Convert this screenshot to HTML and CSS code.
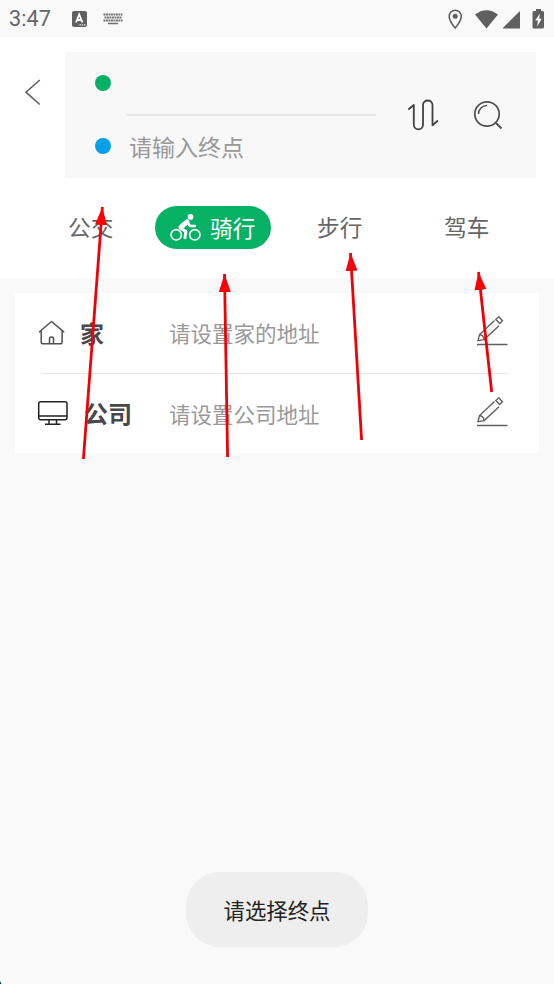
FILE: index.html
```html
<!DOCTYPE html>
<html lang="zh-CN">
<head>
<meta charset="UTF-8">
<title>路线</title>
<link rel="stylesheet" href="styles.css">
</head>
<body>
<main class="screen">
  <header class="status">
    <span class="clock">3:47</span>
    <svg class="ime" width="15" height="16" viewBox="0 0 15 16"><rect width="15" height="16" rx="2" fill="#606060"/><path d="M4 11.5 7.2 3.5 10.4 11.5M5.2 9h4" fill="none" stroke="#fff" stroke-width="1.8"/><path d="M7.5 13.8h6" stroke="#fff" stroke-width="1.2" stroke-dasharray="1.3 1"/></svg>
    <svg class="keyboard" width="20" height="12" viewBox="0 0 20 12"><g stroke="#707070" stroke-width="1.9" stroke-dasharray="1.9 .6"><path d="M.5 1.5h19M1.5 4.5h17M.5 7.5h19"/></g><path d="M5 10.5h10" stroke="#707070" stroke-width="1.5"/></svg>
    <svg class="system" width="100" height="24" viewBox="0 0 100 24"><g fill="#606060"><path d="M1.2 9.2a6 6 0 0 1 12 0C13.2 14 7.2 21 7.2 21S1.2 14 1.2 9.2Z" fill="none" stroke="#606060" stroke-width="1.6"/><circle cx="7.2" cy="9.2" r="2.5"/><path d="M27 7.500Q38.500-1 50 7.500L38.500 21.500ZM55 21.500V20.800L72 4V21.500ZM86 4H88V2H93V4H94.500a1.500 1.500 0 0 1 1.500 1.500V20a1.500 1.500 0 0 1-1.500 1.500H86A1.500 1.500 0 0 1 84.500 20V5.500A1.500 1.500 0 0 1 86 4Z"/></g><path d="M92 6.500 87.200 13.500H89.900L89.200 19.500 93.700 11.800H91.200Z" fill="#fff"/></svg>
  </header>
  <section class="planner">
    <div class="search-row">
      <svg class="back" width="65" height="126" viewBox="0 0 65 126"><path d="M39.8 28 26 40.2 39.8 52.5" fill="none" stroke="#606060" stroke-width="1.6"/></svg>
      <div class="search-box">
        <div class="dots"><i class="dot start"></i><i class="dot end"></i></div>
        <div class="fields"><div class="field origin"></div><div class="field destination">请输入终点</div></div>
        <svg class="swap" width="32" height="32" viewBox="0 0 32 32"><path d="M1.3 10.5 6.8 6V25.5C6.8 32 16 32 16 25.5V6C16 0 25.5 0 25.5 6V26.3L31 21.5" fill="none" stroke="#404040" stroke-width="1.8" stroke-linejoin="round"/></svg>
        <svg class="find" width="30" height="30" viewBox="0 0 30 30"><g fill="none" stroke="#505050"><circle cx="14" cy="14" r="12.2" stroke-width="1.7"/><path d="M5.500 14A8.500 8.500 0 0 1 14 5.400" stroke-width="1.5"/><path d="M22.500 22.500 28.500 28.500" stroke-width="2"/></g></svg>
      </div>
    </div>
    <nav class="tabs">
      <span class="tab">公交</span>
      <span class="tab active"><svg width="31" height="28" viewBox="0 0 31 28"><g fill="none" stroke="#fff"><circle cx="6.200" cy="20.800" r="5.200" stroke-width="1.6"/><circle cx="24.800" cy="20.800" r="5.200" stroke-width="1.6"/><path d="M17 7.800 11 13.200" stroke-width="5" stroke-linecap="round"/><path d="M10.300 14 15.800 17.400 15 23.800" stroke-width="3" stroke-linejoin="round" stroke-linecap="round"/><path d="M17.500 8 20 12H25" stroke-width="2.400" stroke-linecap="round" stroke-linejoin="round"/></g><circle cx="20.500" cy="2.900" r="2.900" fill="#fff"/></svg>骑行</span>
      <span class="tab">步行</span>
      <span class="tab">驾车</span>
    </nav>
  </section>
  <section class="places">
    <div class="place">
      <svg class="symbol" width="30" height="26" viewBox="0 0 30 26"><g fill="none" stroke="#505050" stroke-width="1.5" stroke-linejoin="round" stroke-linecap="round"><path d="M1.500 11.800 13.500 1.500 25.800 11.800M3.200 10.500V22Q3.200 23.800 5 23.800H22.300Q24.100 23.800 24.100 22V10.500"/><path d="M11.500 23.500V18.500Q11.500 17 13.500 17T15.500 18.500V23.500"/></g></svg>
      <strong class="label">家</strong><span class="hint">请设置家的地址</span>
      <svg class="edit" width="32" height="30" viewBox="0 0 32 30"><g fill="none" stroke="#606060" stroke-width="1.4"><path d="M1 28.500H31.500M18.500 4.500 3.500 18.500 2 24.700 8.200 23.600 23 9.800M3.500 18.500Q7.500 19 8.200 23.600M19.800 3.500 22.800.8 26.500 4.700 23.700 7.600Z"/></g></svg>
    </div>
    <div class="place">
      <svg class="symbol" width="32" height="26" viewBox="0 0 32 26"><g fill="none" stroke="#222" stroke-width="1.5"><rect x="1.700" y="1.700" width="28.300" height="18" rx="2"/><path d="M1.700 16H30M12 20V23.500M19.500 20V23.500M8 24.200H23.500"/></g></svg>
      <strong class="label work">公司</strong><span class="hint">请设置公司地址</span>
      <svg class="edit" width="32" height="30" viewBox="0 0 32 30"><g fill="none" stroke="#606060" stroke-width="1.4"><path d="M1 28.500H31.500M18.500 4.500 3.500 18.500 2 24.700 8.200 23.600 23 9.800M3.500 18.500Q7.500 19 8.200 23.600M19.800 3.500 22.800.8 26.500 4.700 23.700 7.600Z"/></g></svg>
    </div>
  </section>
  <div class="toast">请选择终点</div>
  <svg class="annotations" width="554" height="984" viewBox="0 0 554 984">
    <defs><marker id="tip" viewBox="0 0 18 12" refX="18" refY="6" markerWidth="18" markerHeight="12.500" markerUnits="userSpaceOnUse" orient="auto"><path d="M0 0 18 6 0 12Z" fill="#fa0008"/></marker></defs>
    <g stroke="#f20008" stroke-width="2.8"><path d="M83.400 459 102.400 207" marker-end="url(#tip)"/><path d="M227.600 457 224.500 274" marker-end="url(#tip)"/><path d="M361.600 440 350.500 253" marker-end="url(#tip)"/><path d="M491.700 392 478.500 272" marker-end="url(#tip)"/></g>
    <path d="M0 981 1.500 984H0Z" fill="#123447"/>
  </svg>
</main>
</body>
</html>
```
FILE: styles.css
```css
* { box-sizing: border-box; }
body { margin: 0; }
.screen {
  position: relative;
  display: flex;
  flex-direction: column;
  width: 554px;
  height: 984px;
  overflow: hidden;
  background: #f9f9f9;
  color: #666;
  font-family: "Noto Sans CJK SC", sans-serif;
}
svg { display: block; flex: none; }
.status { display: flex; align-items: center; height: 37px; padding-left: 9px; }
.clock { width: 63px; font: 21.7px Roboto, sans-serif; }
.ime { margin-right: 16px; }
.system { margin-left: auto; margin-right: 6px; }
.planner { height: 241px; padding-top: 15px; background: #fff; }
.search-row { display: flex; height: 126px; }
.search-box { display: flex; align-items: center; width: 471px; background: #f8f8f8; }
.dots { width: 61px; height: 126px; padding: 23px 0 0 30px; }
.dot { display: block; width: 16px; height: 16px; border-radius: 50%; }
.start { background: #06b065; }
.end { margin-top: 47px; background: #06a0e8; }
.fields { width: 250px; height: 126px; }
.origin { height: 64px; border-bottom: 2px solid #e8e8e8; }
.destination { padding-left: 3px; color: #999; font-size: 23px; line-height: 60px; }
.swap { margin-left: 31px; }
.find { margin-left: 34px; }
.tabs {
  display: grid;
  grid-template-columns: 87px 162px 127px 46px;
  margin: 28px 0 0 68px;
  height: 43px;
  justify-content: start;
  align-items: center;
  font-size: 22.7px;
  line-height: 42px;
  white-space: nowrap;
}
.tab { height: 43px; }
.active { display: flex; align-items: center; width: 116px; padding-left: 15px; border-radius: 22px; background: #06b065; color: #fff; }
.active svg { margin: 0 9px 0 0; }
.places { width: 524px; height: 160px; margin: 15px 0 0 15px; background: #fff; }
.place { display: flex; align-items: center; height: 81px; padding: 0 31px 0 22px; background: linear-gradient(#e6e6e6, #e6e6e6) 27px 80px / 466px 1px no-repeat; }
.place:last-child { background: none; height: 79px; }
.symbol { width: 32px; margin-bottom: 1px; }
.label { width: 100px; padding-left: 11px; color: #484848; font-size: 24px; line-height: 36px; font-weight: 700; margin-bottom: 2px; }
.work { padding-left: 15px; }
.hint { color: #999; font-size: 21.5px; line-height: 32px; margin-bottom: 1px; }
.edit { margin-left: auto; margin-bottom: 5px; }
.place:last-child .edit { margin-bottom: 3px; }
.place:last-child .hint { margin-bottom: 0; }
.toast { width: 182px; height: 75px; margin: 419px 0 0 186px; border-radius: 34px; background: #eee; color: #222; font-size: 21.4px; line-height: 75px; text-align: center; }
.annotations { position: absolute; inset: 0; pointer-events: none; }
```
